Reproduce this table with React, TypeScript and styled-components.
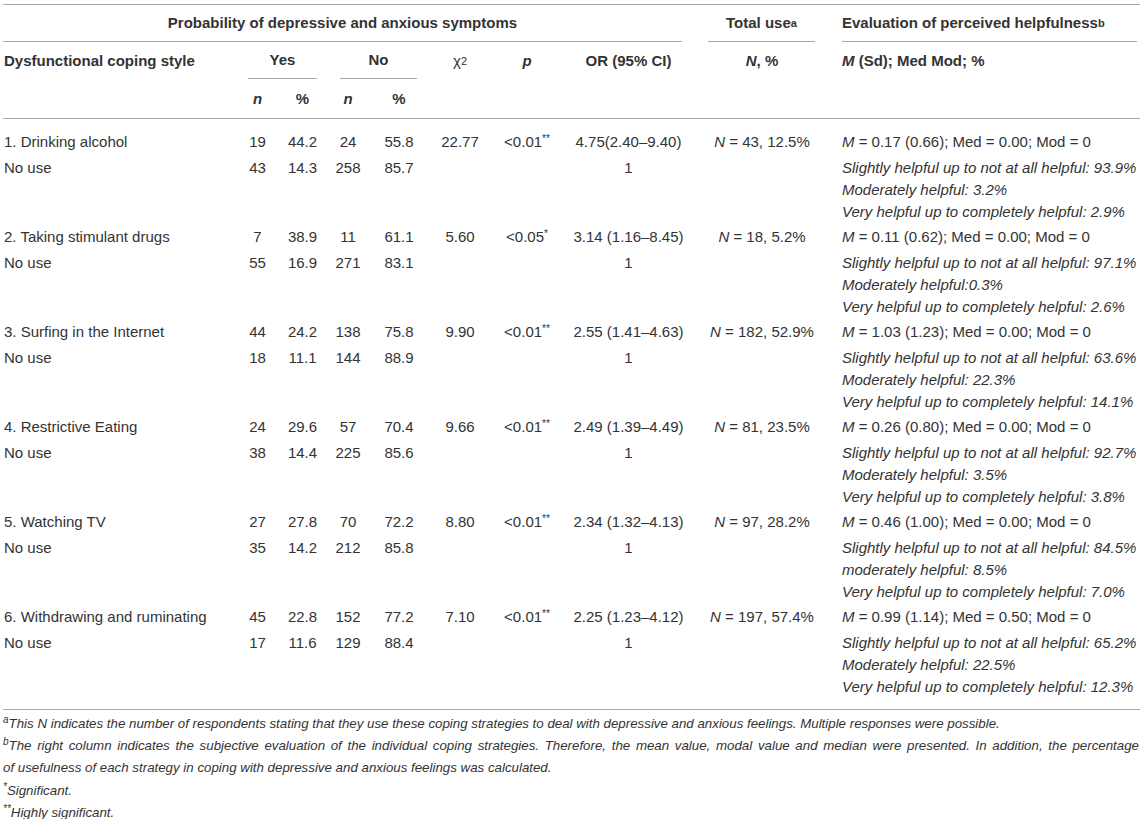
import React from "react";
import styled, { createGlobalStyle } from "styled-components";

const GlobalStyle = createGlobalStyle`
  html, body {
    margin: 0;
    padding: 0;
    background: #fff;
    overflow: hidden;
  }
  body {
    font-family: "Liberation Sans", Arial, Helvetica, sans-serif;
    font-size: 15px;
    color: #333;
  }
`;

// layout
const Page = styled.div`
  padding: 4px 5px 0 3px;
`;

const Table = styled.div`
  display: grid;
  grid-template-columns: 233px 43px 47px 44px 58px 64px 70px 133px 134px 311px;
`;

const Rule = styled.div<{ $before?: number; $after?: number }>`
  grid-column: 1 / -1;
  border-top: 1px solid #a9a9a9;
  margin-top: ${(p) => p.$before ?? 0}px;
  margin-bottom: ${(p) => p.$after ?? 0}px;
`;

const HeadCell = styled.div<{ $span?: number; $h: number; $align?: string; $pl?: number }>`
  grid-column: span ${(p) => p.$span ?? 1};
  height: ${(p) => p.$h}px;
  display: flex;
  align-items: center;
  justify-content: ${(p) => p.$align ?? "center"};
  padding-left: ${(p) => p.$pl ?? 0}px;
  font-weight: bold;
  line-height: 18px;
  white-space: nowrap;
`;

const GroupHead = styled(HeadCell)<{ $ml: number; $mr: number }>`
  margin: 0 ${(p) => p.$mr}px 0 ${(p) => p.$ml}px;
  border-bottom: 1px solid #a9a9a9;
  box-sizing: border-box;
`;

const Cell = styled.div<{ $align?: string; $pl?: number; $pr?: number }>`
  padding: 1.75px ${(p) => p.$pr ?? 0}px 1.75px ${(p) => p.$pl ?? 0}px;
  line-height: 22px;
  text-align: ${(p) => p.$align ?? "center"};
  white-space: nowrap;
`;

const Line = styled.div``;

const Sup = styled.sup<{ $size?: number; $raise?: number }>`
  font-size: ${(p) => p.$size ?? 10}px;
  line-height: 0;
  vertical-align: ${(p) => p.$raise ?? 0.55}em;
`;

const I = styled.i``;

const Notes = styled.div`
  padding-top: 3px;
  width: 1136px;
  font-style: italic;
  font-size: 13.3px;
  line-height: 22.2px;
`;

const Note = styled.div<{ $justify?: boolean }>`
  white-space: nowrap;
  text-align: ${(p) => (p.$justify ? "justify" : "left")};
  text-align-last: ${(p) => (p.$justify ? "justify" : "auto")};
`;

// data
interface Group {
  name: string;
  yes: [string, string];
  no: [string, string];
  noUseYes: [string, string];
  noUseNo: [string, string];
  chi: string;
  p: string;
  stars: string;
  or: string;
  total: string;
  m: string;
  help: string[];
}

const groups: Group[] = [
  {
    name: "1. Drinking alcohol",
    yes: ["19", "44.2"],
    no: ["24", "55.8"],
    noUseYes: ["43", "14.3"],
    noUseNo: ["258", "85.7"],
    chi: "22.77",
    p: "<0.01",
    stars: "**",
    or: "4.75(2.40–9.40)",
    total: "43, 12.5%",
    m: " = 0.17 (0.66); Med = 0.00; Mod = 0",
    help: [
      "Slightly helpful up to not at all helpful: 93.9%",
      "Moderately helpful: 3.2%",
      "Very helpful up to completely helpful: 2.9%",
    ],
  },
  {
    name: "2. Taking stimulant drugs",
    yes: ["7", "38.9"],
    no: ["11", "61.1"],
    noUseYes: ["55", "16.9"],
    noUseNo: ["271", "83.1"],
    chi: "5.60",
    p: "<0.05",
    stars: "*",
    or: "3.14 (1.16–8.45)",
    total: "18, 5.2%",
    m: " = 0.11 (0.62); Med = 0.00; Mod = 0",
    help: [
      "Slightly helpful up to not at all helpful: 97.1%",
      "Moderately helpful:0.3%",
      "Very helpful up to completely helpful: 2.6%",
    ],
  },
  {
    name: "3. Surfing in the Internet",
    yes: ["44", "24.2"],
    no: ["138", "75.8"],
    noUseYes: ["18", "11.1"],
    noUseNo: ["144", "88.9"],
    chi: "9.90",
    p: "<0.01",
    stars: "**",
    or: "2.55 (1.41–4.63)",
    total: "182, 52.9%",
    m: " = 1.03 (1.23); Med = 0.00; Mod = 0",
    help: [
      "Slightly helpful up to not at all helpful: 63.6%",
      "Moderately helpful: 22.3%",
      "Very helpful up to completely helpful: 14.1%",
    ],
  },
  {
    name: "4. Restrictive Eating",
    yes: ["24", "29.6"],
    no: ["57", "70.4"],
    noUseYes: ["38", "14.4"],
    noUseNo: ["225", "85.6"],
    chi: "9.66",
    p: "<0.01",
    stars: "**",
    or: "2.49 (1.39–4.49)",
    total: "81, 23.5%",
    m: " = 0.26 (0.80); Med = 0.00; Mod = 0",
    help: [
      "Slightly helpful up to not at all helpful: 92.7%",
      "Moderately helpful: 3.5%",
      "Very helpful up to completely helpful: 3.8%",
    ],
  },
  {
    name: "5. Watching TV",
    yes: ["27", "27.8"],
    no: ["70", "72.2"],
    noUseYes: ["35", "14.2"],
    noUseNo: ["212", "85.8"],
    chi: "8.80",
    p: "<0.01",
    stars: "**",
    or: "2.34 (1.32–4.13)",
    total: "97, 28.2%",
    m: " = 0.46 (1.00); Med = 0.00; Mod = 0",
    help: [
      "Slightly helpful up to not at all helpful: 84.5%",
      "moderately helpful: 8.5%",
      "Very helpful up to completely helpful: 7.0%",
    ],
  },
  {
    name: "6. Withdrawing and ruminating",
    yes: ["45", "22.8"],
    no: ["152", "77.2"],
    noUseYes: ["17", "11.6"],
    noUseNo: ["129", "88.4"],
    chi: "7.10",
    p: "<0.01",
    stars: "**",
    or: "2.25 (1.23–4.12)",
    total: "197, 57.4%",
    m: " = 0.99 (1.14); Med = 0.50; Mod = 0",
    help: [
      "Slightly helpful up to not at all helpful: 65.2%",
      "Moderately helpful: 22.5%",
      "Very helpful up to completely helpful: 12.3%",
    ],
  },
];

const GroupRows: React.FC<{ g: Group }> = ({ g }) => (
  <>
    <Cell $align="left" $pl={1}>{g.name}</Cell>
    <Cell>{g.yes[0]}</Cell>
    <Cell>{g.yes[1]}</Cell>
    <Cell>{g.no[0]}</Cell>
    <Cell>{g.no[1]}</Cell>
    <Cell>{g.chi}</Cell>
    <Cell>
      {g.p}
      <Sup>{g.stars}</Sup>
    </Cell>
    <Cell>{g.or}</Cell>
    <Cell>
      <I>N</I> = {g.total}
    </Cell>
    <Cell $align="left" $pl={13}>
      <I>M</I>
      {g.m}
    </Cell>

    <Cell $align="left" $pl={1}>No use</Cell>
    <Cell>{g.noUseYes[0]}</Cell>
    <Cell>{g.noUseYes[1]}</Cell>
    <Cell>{g.noUseNo[0]}</Cell>
    <Cell>{g.noUseNo[1]}</Cell>
    <Cell />
    <Cell />
    <Cell>1</Cell>
    <Cell />
    <Cell $align="left" $pl={13}>
      {g.help.map((h) => (
        <Line key={h}>
          <I>{h}</I>
        </Line>
      ))}
    </Cell>
  </>
);

const App: React.FC = () => (
  <>
    <GlobalStyle />
    <Page>
      <Table>
        <Rule />
        {/* header row 1 */}
        <GroupHead $span={8} $h={37} $ml={0} $mr={13}>
          Probability of depressive and anxious symptoms
        </GroupHead>
        <GroupHead $h={37} $ml={13} $mr={14}>
          Total use<Sup $size={11} $raise={0.7}>a</Sup>
        </GroupHead>
        <GroupHead $h={37} $ml={13} $mr={3} $align="flex-start">
          Evaluation of perceived helpfulness<Sup $size={11} $raise={0.7}>b</Sup>
        </GroupHead>

        {/* header row 2 */}
        <HeadCell $h={37} $align="flex-start" $pl={1}>
          Dysfunctional coping style
        </HeadCell>
        <GroupHead $span={2} $h={37} $ml={12} $mr={9}>
          Yes
        </GroupHead>
        <GroupHead $span={2} $h={37} $ml={14} $mr={11}>
          No
        </GroupHead>
        <HeadCell $h={37} style={{ fontWeight: "normal" }}>
          χ<Sup $size={11} $raise={0.7}>2</Sup>
        </HeadCell>
        <HeadCell $h={37}>
          <I>p</I>
        </HeadCell>
        <HeadCell $h={37}>OR (95% CI)</HeadCell>
        <HeadCell $h={37}>
          <I>N</I>, %
        </HeadCell>
        <HeadCell $h={37} $align="flex-start" $pl={13}>
          <I>M</I>&nbsp;(Sd); Med Mod; %
        </HeadCell>

        {/* header row 3 */}
        <HeadCell $h={39} />
        <HeadCell $h={39}>
          <I>n</I>
        </HeadCell>
        <HeadCell $h={39}>%</HeadCell>
        <HeadCell $h={39}>
          <I>n</I>
        </HeadCell>
        <HeadCell $h={39}>%</HeadCell>
        <HeadCell $h={39} $span={5} />

        <Rule $after={10.5} />

        {groups.map((g) => (
          <GroupRows key={g.name} g={g} />
        ))}

        <Rule $before={9.5} />
      </Table>

      <Notes>
        <Note>
          <Sup>a</Sup>This N indicates the number of respondents stating that they use these coping
          strategies to deal with depressive and anxious feelings. Multiple responses were possible.
        </Note>
        <Note $justify>
          <Sup>b</Sup>The right column indicates the subjective evaluation of the individual coping
          strategies. Therefore, the mean value, modal value and median were presented. In addition,
          the percentage
        </Note>
        <Note>
          of usefulness of each strategy in coping with depressive and anxious feelings was
          calculated.
        </Note>
        <Note>
          <Sup>*</Sup>Significant.
        </Note>
        <Note>
          <Sup>**</Sup>Highly significant.
        </Note>
      </Notes>
    </Page>
  </>
);

export default App;
